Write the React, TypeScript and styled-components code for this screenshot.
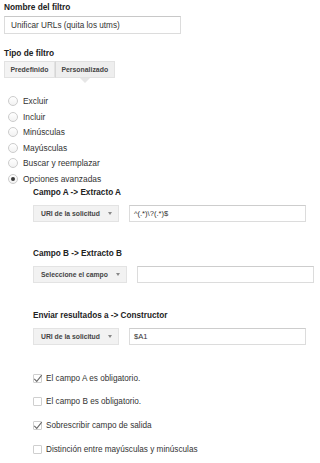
import React from 'react';
import styled, { createGlobalStyle } from 'styled-components';

const GlobalStyle = createGlobalStyle`
  html, body {
    margin: 0;
    padding: 0;
    background: #ffffff;
  }
  body {
    font-family: "Liberation Sans", Arial, Helvetica, sans-serif;
    color: #333333;
  }
`;

const filterTypes = [
  'Excluir',
  'Incluir',
  'Minúsculas',
  'Mayúsculas',
  'Buscar y reemplazar',
  'Opciones avanzadas',
];

const options = [
  { label: 'El campo A es obligatorio.', checked: true },
  { label: 'El campo B es obligatorio.', checked: false },
  { label: 'Sobrescribir campo de salida', checked: true },
  { label: 'Distinción entre mayúsculas y minúsculas', checked: false },
];

const App: React.FC = () => {
  return (
    <>
      <GlobalStyle />
      <Page>
        <Title>Nombre del filtro</Title>
        <NameInput>Unificar URLs (quita los utms)</NameInput>

        <Title $top={14}>Tipo de filtro</Title>
        <Tabs>
          <Tab>Predefinido</Tab>
          <Tab $active>Personalizado</Tab>
        </Tabs>

        <RadioList>
          {filterTypes.map((t) => (
            <RadioRow key={t}>
              <Radio $checked={t === 'Opciones avanzadas'} />
              <span>{t}</span>
            </RadioRow>
          ))}
        </RadioList>

        <Advanced>
          <FieldGroup>
            <SubTitle>Campo A -&gt; Extracto A</SubTitle>
            <FieldRow>
              <SelectButton>
                URI de la solicitud
                <Caret />
              </SelectButton>
              <FieldInput>^(.*)\?(.*)$</FieldInput>
            </FieldRow>
          </FieldGroup>

          <FieldGroup>
            <SubTitle>Campo B -&gt; Extracto B</SubTitle>
            <FieldRow>
              <SelectButton>
                Seleccione el campo
                <Caret />
              </SelectButton>
              <FieldInput />
            </FieldRow>
          </FieldGroup>

          <FieldGroup>
            <SubTitle>Enviar resultados a -&gt; Constructor</SubTitle>
            <FieldRow>
              <SelectButton>
                URI de la solicitud
                <Caret />
              </SelectButton>
              <FieldInput>$A1</FieldInput>
            </FieldRow>
          </FieldGroup>

          <CheckList>
            {options.map((o) => (
              <CheckRow key={o.label}>
                <CheckBox>
                  {o.checked && (
                    <CheckMark viewBox="0 0 12 10">
                      <path d="M1.5 5.5 L4.5 8.5 L10.5 1" fill="none" stroke="#6a6a6a" strokeWidth="1.3" />
                    </CheckMark>
                  )}
                </CheckBox>
                <span>{o.label}</span>
              </CheckRow>
            ))}
          </CheckList>
        </Advanced>
      </Page>
    </>
  );
};

const Page = styled.div`
  display: flex;
  flex-direction: column;
  align-items: flex-start;
  padding: 2px 4px 0 4px;
  width: 320px;
  box-sizing: border-box;
`;

const Title = styled.div<{ $top?: number }>`
  font-size: 8.3px;
  font-weight: bold;
  line-height: 10px;
  color: #222222;
  margin-top: ${({ $top }) => $top ?? 0}px;
  margin-bottom: 4px;
`;

const NameInput = styled.div`
  box-sizing: border-box;
  width: 177px;
  height: 18px;
  border: 1px solid #dcdcdc;
  border-top-color: #c8c8c8;
  padding: 0 6px;
  display: flex;
  align-items: center;
  font-size: 8.2px;
  color: #333333;
  white-space: nowrap;
`;

const Tabs = styled.div`
  display: flex;
  margin-top: -1px;
  height: 17px;
`;

const Tab = styled.div<{ $active?: boolean }>`
  position: relative;
  box-sizing: border-box;
  display: flex;
  align-items: center;
  padding: 0 5.5px;
  height: 17px;
  font-size: 6.9px;
  font-weight: bold;
  color: #444444;
  background: ${({ $active }) => ($active ? '#eeeeee' : '#f3f3f3')};
  border: 1px solid #e2e2e2;
  & + & {
    border-left: 1px solid #d6d6d6;
  }

  ${({ $active }) =>
    $active &&
    `
    &::after {
      content: '';
      position: absolute;
      left: 50%;
      bottom: -6px;
      margin-left: -5px;
      border-left: 5px solid transparent;
      border-right: 5px solid transparent;
      border-top: 5px solid #e6e6e6;
    }
  `}
`;

const RadioList = styled.div`
  display: grid;
  grid-auto-rows: 15.6px;
  margin-top: 15.2px;
  padding-left: 4px;
`;

const RadioRow = styled.label`
  display: flex;
  align-items: center;
  gap: 5px;
  font-size: 8.4px;
  color: #333333;
  white-space: nowrap;
`;

const Radio = styled.span<{ $checked?: boolean }>`
  box-sizing: border-box;
  width: 10px;
  height: 10px;
  border-radius: 50%;
  border: 1px solid #cccccc;
  background: linear-gradient(#ffffff, #f2f2f2);
  display: flex;
  align-items: center;
  justify-content: center;

  &::after {
    content: '';
    width: 4px;
    height: 4px;
    border-radius: 50%;
    background: ${({ $checked }) => ($checked ? '#3a3a3a' : 'transparent')};
  }
`;

const Advanced = styled.div`
  display: flex;
  flex-direction: column;
  gap: 27.5px;
  padding-left: 29px;
  margin-top: 1px;
`;

const FieldGroup = styled.div`
  display: flex;
  flex-direction: column;
  gap: 7px;
`;

const SubTitle = styled.div`
  font-size: 8.2px;
  font-weight: bold;
  line-height: 10px;
  color: #222222;
`;

const FieldRow = styled.div`
  display: flex;
  align-items: center;
  gap: 10px;
`;

const SelectButton = styled.div`
  box-sizing: border-box;
  height: 17px;
  display: flex;
  align-items: center;
  gap: 8px;
  padding: 0 6px 0 7px;
  font-size: 6.8px;
  font-weight: bold;
  color: #444444;
  background: #f2f2f2;
  border: 1px solid #e3e3e3;
  white-space: nowrap;
`;

const Caret = styled.span`
  width: 0;
  height: 0;
  border-left: 2.5px solid transparent;
  border-right: 2.5px solid transparent;
  border-top: 3px solid #888888;
`;

const FieldInput = styled.div`
  box-sizing: border-box;
  width: 177px;
  height: 17px;
  border: 1px solid #dcdcdc;
  border-top-color: #cdcdcd;
  padding: 0 4px;
  display: flex;
  align-items: center;
  font-size: 7.6px;
  color: #333333;
  white-space: nowrap;
`;

const CheckList = styled.div`
  display: grid;
  grid-auto-rows: 23.7px;
  margin-top: -6px;
`;

const CheckRow = styled.label`
  display: flex;
  align-items: center;
  gap: 4px;
  font-size: 8.2px;
  color: #333333;
  white-space: nowrap;
`;

const CheckBox = styled.span`
  position: relative;
  box-sizing: border-box;
  width: 9px;
  height: 9px;
  border: 1px solid #cfcfcf;
  border-radius: 1px;
  background: #ffffff;
`;

const CheckMark = styled.svg`
  position: absolute;
  left: -1px;
  top: -1px;
  width: 10px;
  height: 9px;
`;

export default App;
